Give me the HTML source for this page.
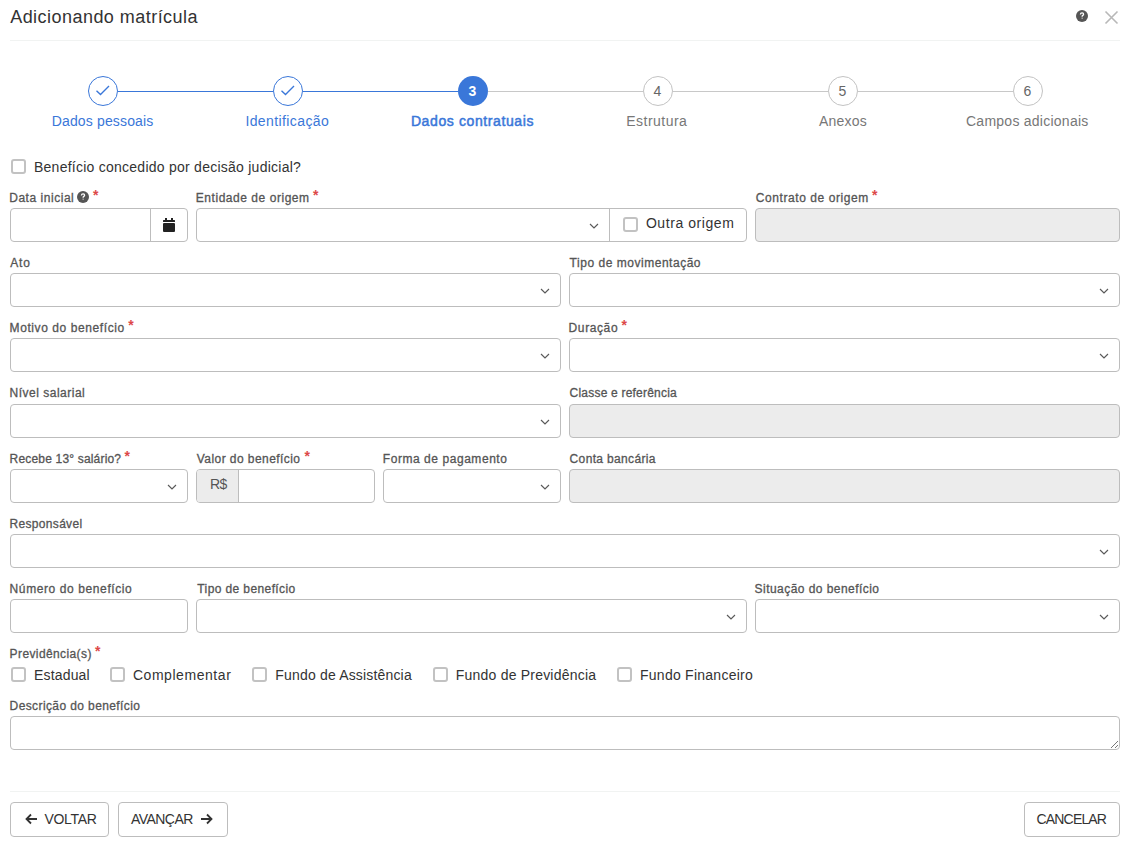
<!DOCTYPE html>
<html><head><meta charset="utf-8"><title>Adicionando matrícula</title>
<style>
*{margin:0;padding:0;box-sizing:border-box}
html,body{width:1132px;height:842px;background:#fff;overflow:hidden;font-family:"Liberation Sans",sans-serif}
.t{position:absolute;white-space:nowrap}
.box{position:absolute;border:1px solid #bdbdbd;border-radius:4px}
.ic{position:absolute}
.cb{position:absolute;width:15px;height:15px;border:2px solid #c2c2c2;border-radius:3px;background:#fff}
.star{font-size:14px;line-height:14px;color:#dd4848;font-weight:700}
.line{position:absolute;height:1px}
.btn{position:absolute;border:1px solid #bdbdbd;border-radius:4px;background:#fff}
</style></head>
<body>
<div class="t" style="left:10.2px;top:8px;font-size:18px;line-height:18px;color:#333;font-weight:400;letter-spacing:0.46px;">Adicionando matrícula</div>
<svg class="ic" style="left:1076px;top:10.2px" width="12" height="12" viewBox="0 0 12 12"><circle cx="6" cy="6" r="6" fill="#555"/><path d="M4.4 4.5 Q4.5 2.9 6.1 2.9 Q7.6 2.9 7.6 4.2 Q7.6 5.0 6.8 5.4 Q6.1 5.8 6.1 6.7" fill="none" stroke="#fff" stroke-width="1.3"/><path d="M5.3 7.7 L6.9 7.7 L6.1 9.0 Z" fill="#fff"/></svg>
<svg class="ic" style="left:1104px;top:10px" width="15" height="15" viewBox="0 0 15 15"><path d="M1.5 1.5 L13.5 13.5 M13.5 1.5 L1.5 13.5" stroke="#b8b8b8" stroke-width="1.6"/></svg>
<div class="line" style="left:10px;top:40px;width:1110px;background:#f1f3f2"></div>
<div class="line" style="left:117.5px;top:91px;width:155.0px;background:#3a77d9"></div>
<div class="line" style="left:302.5px;top:91px;width:155.0px;background:#3a77d9"></div>
<div class="line" style="left:487.5px;top:91px;width:155.0px;background:#c8c8c8"></div>
<div class="line" style="left:672.5px;top:91px;width:155.0px;background:#c8c8c8"></div>
<div class="line" style="left:857.5px;top:91px;width:155.0px;background:#c8c8c8"></div>
<div style="position:absolute;left:87.5px;top:76px;width:30px;height:30px;border:1px solid #3a77d9;border-radius:50%;background:#fff"></div>
<svg class="ic" style="left:87.5px;top:76px" width="30" height="30" viewBox="0 0 30 30"><path d="M8.5 14.7 L12.5 18.5 L21 10" fill="none" stroke="#3a77d9" stroke-width="1.35"/></svg>
<div class="t" style="left:51.7px;top:114px;font-size:14px;line-height:14px;color:#3a77d9;font-weight:400;letter-spacing:0.154px;">Dados pessoais</div>
<div style="position:absolute;left:272.5px;top:76px;width:30px;height:30px;border:1px solid #3a77d9;border-radius:50%;background:#fff"></div>
<svg class="ic" style="left:272.5px;top:76px" width="30" height="30" viewBox="0 0 30 30"><path d="M8.5 14.7 L12.5 18.5 L21 10" fill="none" stroke="#3a77d9" stroke-width="1.35"/></svg>
<div class="t" style="left:245.4px;top:114px;font-size:14px;line-height:14px;color:#3a77d9;font-weight:400;letter-spacing:0.4px;">Identificação</div>
<div style="position:absolute;left:457.5px;top:76px;width:30px;height:30px;border-radius:50%;background:#3a77d9"></div>
<div class="t" style="left:457.5px;width:30px;text-align:center;top:84px;font-size:14px;line-height:14px;color:#fff;font-weight:700">3</div>
<div class="t" style="left:410.9px;top:114px;font-size:14px;line-height:14px;color:#3a77d9;font-weight:400;letter-spacing:0.606px;-webkit-text-stroke:0.5px #3a77d9;">Dados contratuais</div>
<div style="position:absolute;left:642.5px;top:76px;width:30px;height:30px;border:1px solid #c3c3c3;border-radius:50%;background:#fff"></div>
<div class="t" style="left:642.5px;width:30px;text-align:center;top:84px;font-size:14px;line-height:14px;color:#666">4</div>
<div class="t" style="left:626.2px;top:114px;font-size:14px;line-height:14px;color:#777;font-weight:400;letter-spacing:0.487px;">Estrutura</div>
<div style="position:absolute;left:827.5px;top:76px;width:30px;height:30px;border:1px solid #c3c3c3;border-radius:50%;background:#fff"></div>
<div class="t" style="left:827.5px;width:30px;text-align:center;top:84px;font-size:14px;line-height:14px;color:#666">5</div>
<div class="t" style="left:819.0px;top:114px;font-size:14px;line-height:14px;color:#777;font-weight:400;letter-spacing:0.2px;">Anexos</div>
<div style="position:absolute;left:1012.5px;top:76px;width:30px;height:30px;border:1px solid #c3c3c3;border-radius:50%;background:#fff"></div>
<div class="t" style="left:1012.5px;width:30px;text-align:center;top:84px;font-size:14px;line-height:14px;color:#666">6</div>
<div class="t" style="left:966.0px;top:114px;font-size:14px;line-height:14px;color:#777;font-weight:400;letter-spacing:0.25px;">Campos adicionais</div>
<div class="cb" style="left:11px;top:159px"></div>
<div class="t" style="left:34.0px;top:160px;font-size:14px;line-height:14px;color:#333;font-weight:400;letter-spacing:0.25px;">Benefício concedido por decisão judicial?</div>
<div class="t" style="left:9.2px;top:192px;font-size:12px;line-height:12px;color:#555;font-weight:400;letter-spacing:0.536px;-webkit-text-stroke:0.3px #555;">Data inicial</div>
<svg class="ic" style="left:77px;top:191px" width="12" height="12" viewBox="0 0 12 12"><circle cx="6" cy="6" r="6" fill="#555"/><path d="M4.4 4.5 Q4.5 2.9 6.1 2.9 Q7.6 2.9 7.6 4.2 Q7.6 5.0 6.8 5.4 Q6.1 5.8 6.1 6.7" fill="none" stroke="#fff" stroke-width="1.3"/><path d="M5.3 7.7 L6.9 7.7 L6.1 9.0 Z" fill="#fff"/></svg>
<div class="t star" style="left:93px;top:188px">*</div>
<div class="box" style="left:10.00px;top:208px;width:178.33px;height:34px;background:#fff;"></div>
<div class="line" style="left:150px;top:208px;width:1px;height:34px;background:#bdbdbd"></div>
<svg class="ic" style="left:163px;top:218px" width="12" height="14" viewBox="0 0 12 14"><rect x="2" y="0" width="2" height="3" fill="#222"/><rect x="8" y="0" width="2" height="3" fill="#222"/><rect x="0" y="2" width="12" height="2" rx="0.5" fill="#222"/><rect x="0" y="5" width="12" height="9" rx="1" fill="#222"/></svg>
<div class="t" style="left:195.8px;top:192px;font-size:12px;line-height:12px;color:#555;font-weight:400;letter-spacing:0.541px;-webkit-text-stroke:0.3px #555;">Entidade de origem</div>
<div class="t star" style="left:313px;top:188px">*</div>
<div class="box" style="left:196.33px;top:208px;width:551.00px;height:34px;background:#fff;"></div>
<div class="line" style="left:609px;top:208px;width:1px;height:34px;background:#bdbdbd"></div>
<svg class="ic" style="left:589px;top:222px" width="10" height="8" viewBox="0 0 10 8"><path d="M1 2 L5 6 L9 2" fill="none" stroke="#5a5a5a" stroke-width="1.15"/></svg>
<div class="cb" style="left:623px;top:217px"></div>
<div class="t" style="left:645.9px;top:216px;font-size:14px;line-height:14px;color:#333;font-weight:400;letter-spacing:0.573px;">Outra origem</div>
<div class="t" style="left:755.8px;top:192px;font-size:12px;line-height:12px;color:#555;font-weight:400;letter-spacing:0.571px;-webkit-text-stroke:0.3px #555;">Contrato de origem</div>
<div class="t star" style="left:872px;top:188px">*</div>
<div class="box" style="left:755.33px;top:208px;width:364.67px;height:34px;background:#ececec;"></div>
<div class="t" style="left:10.2px;top:257px;font-size:12px;line-height:12px;color:#555;font-weight:400;letter-spacing:0.9px;-webkit-text-stroke:0.3px #555;">Ato</div>
<div class="box" style="left:10.00px;top:273px;width:551.00px;height:34px;background:#fff;"></div>
<svg class="ic" style="left:540px;top:287px" width="10" height="8" viewBox="0 0 10 8"><path d="M1 2 L5 6 L9 2" fill="none" stroke="#5a5a5a" stroke-width="1.15"/></svg>
<div class="t" style="left:569.6px;top:257px;font-size:12px;line-height:12px;color:#555;font-weight:400;letter-spacing:0.526px;-webkit-text-stroke:0.3px #555;">Tipo de movimentação</div>
<div class="box" style="left:569.00px;top:273px;width:551.00px;height:34px;background:#fff;"></div>
<svg class="ic" style="left:1099px;top:287px" width="10" height="8" viewBox="0 0 10 8"><path d="M1 2 L5 6 L9 2" fill="none" stroke="#5a5a5a" stroke-width="1.15"/></svg>
<div class="t" style="left:9.6px;top:322px;font-size:12px;line-height:12px;color:#555;font-weight:400;letter-spacing:0.583px;-webkit-text-stroke:0.3px #555;">Motivo do benefício</div>
<div class="t star" style="left:128.3px;top:318px">*</div>
<div class="box" style="left:10.00px;top:338px;width:551.00px;height:34px;background:#fff;"></div>
<svg class="ic" style="left:540px;top:352px" width="10" height="8" viewBox="0 0 10 8"><path d="M1 2 L5 6 L9 2" fill="none" stroke="#5a5a5a" stroke-width="1.15"/></svg>
<div class="t" style="left:568.6px;top:322px;font-size:12px;line-height:12px;color:#555;font-weight:400;letter-spacing:0.6px;-webkit-text-stroke:0.3px #555;">Duração</div>
<div class="t star" style="left:621.5px;top:318px">*</div>
<div class="box" style="left:569.00px;top:338px;width:551.00px;height:34px;background:#fff;"></div>
<svg class="ic" style="left:1099px;top:352px" width="10" height="8" viewBox="0 0 10 8"><path d="M1 2 L5 6 L9 2" fill="none" stroke="#5a5a5a" stroke-width="1.15"/></svg>
<div class="t" style="left:9.6px;top:387px;font-size:12px;line-height:12px;color:#555;font-weight:400;letter-spacing:0.5px;-webkit-text-stroke:0.3px #555;">Nível salarial</div>
<div class="box" style="left:10.00px;top:404px;width:551.00px;height:34px;background:#fff;"></div>
<svg class="ic" style="left:540px;top:418px" width="10" height="8" viewBox="0 0 10 8"><path d="M1 2 L5 6 L9 2" fill="none" stroke="#5a5a5a" stroke-width="1.15"/></svg>
<div class="t" style="left:569.6px;top:387px;font-size:12px;line-height:12px;color:#555;font-weight:400;letter-spacing:0.206px;-webkit-text-stroke:0.3px #555;">Classe e referência</div>
<div class="box" style="left:569.00px;top:404px;width:551.00px;height:34px;background:#ececec;"></div>
<div class="t" style="left:9.6px;top:453px;font-size:12px;line-height:12px;color:#555;font-weight:400;letter-spacing:0.178px;-webkit-text-stroke:0.3px #555;">Recebe 13° salário?</div>
<div class="t star" style="left:124.4px;top:449px">*</div>
<div class="box" style="left:10.00px;top:469px;width:178.33px;height:34px;background:#fff;"></div>
<svg class="ic" style="left:167px;top:483px" width="10" height="8" viewBox="0 0 10 8"><path d="M1 2 L5 6 L9 2" fill="none" stroke="#5a5a5a" stroke-width="1.15"/></svg>
<div class="t" style="left:196.8px;top:453px;font-size:12px;line-height:12px;color:#555;font-weight:400;letter-spacing:0.435px;-webkit-text-stroke:0.3px #555;">Valor do benefício</div>
<div class="t star" style="left:304.5px;top:449px">*</div>
<div class="box" style="left:196.33px;top:469px;width:178.33px;height:34px;background:#fff;"></div>
<div style="position:absolute;left:196.5px;top:470px;width:42px;height:32px;background:#ececec;border-radius:3px 0 0 3px"></div>
<div class="line" style="left:238px;top:469px;width:1px;height:34px;background:#bdbdbd"></div>
<div class="t" style="left:210px;top:477px;font-size:14px;line-height:14px;color:#555;font-weight:400;letter-spacing:-0.5px;">R$</div>
<div class="t" style="left:382.8px;top:453px;font-size:12px;line-height:12px;color:#555;font-weight:400;letter-spacing:0.553px;-webkit-text-stroke:0.3px #555;">Forma de pagamento</div>
<div class="box" style="left:382.67px;top:469px;width:178.33px;height:34px;background:#fff;"></div>
<svg class="ic" style="left:540px;top:483px" width="10" height="8" viewBox="0 0 10 8"><path d="M1 2 L5 6 L9 2" fill="none" stroke="#5a5a5a" stroke-width="1.15"/></svg>
<div class="t" style="left:569.6px;top:453px;font-size:12px;line-height:12px;color:#555;font-weight:400;letter-spacing:0.346px;-webkit-text-stroke:0.3px #555;">Conta bancária</div>
<div class="box" style="left:569.00px;top:469px;width:551.00px;height:34px;background:#ececec;"></div>
<div class="t" style="left:9.6px;top:518px;font-size:12px;line-height:12px;color:#555;font-weight:400;letter-spacing:0.31px;-webkit-text-stroke:0.3px #555;">Responsável</div>
<div class="box" style="left:10.00px;top:534px;width:1110.00px;height:34px;background:#fff;"></div>
<svg class="ic" style="left:1099px;top:548px" width="10" height="8" viewBox="0 0 10 8"><path d="M1 2 L5 6 L9 2" fill="none" stroke="#5a5a5a" stroke-width="1.15"/></svg>
<div class="t" style="left:9.6px;top:583px;font-size:12px;line-height:12px;color:#555;font-weight:400;letter-spacing:0.6px;-webkit-text-stroke:0.3px #555;">Número do benefício</div>
<div class="box" style="left:10.00px;top:599px;width:178.33px;height:34px;background:#fff;"></div>
<div class="t" style="left:197.3px;top:583px;font-size:12px;line-height:12px;color:#555;font-weight:400;letter-spacing:0.394px;-webkit-text-stroke:0.3px #555;">Tipo de benefício</div>
<div class="box" style="left:196.33px;top:599px;width:551.00px;height:34px;background:#fff;"></div>
<svg class="ic" style="left:726px;top:613px" width="10" height="8" viewBox="0 0 10 8"><path d="M1 2 L5 6 L9 2" fill="none" stroke="#5a5a5a" stroke-width="1.15"/></svg>
<div class="t" style="left:754.6px;top:583px;font-size:12px;line-height:12px;color:#555;font-weight:400;letter-spacing:0.45px;-webkit-text-stroke:0.3px #555;">Situação do benefício</div>
<div class="box" style="left:755.33px;top:599px;width:364.67px;height:34px;background:#fff;"></div>
<svg class="ic" style="left:1099px;top:613px" width="10" height="8" viewBox="0 0 10 8"><path d="M1 2 L5 6 L9 2" fill="none" stroke="#5a5a5a" stroke-width="1.15"/></svg>
<div class="t" style="left:9.6px;top:648px;font-size:12px;line-height:12px;color:#555;font-weight:400;letter-spacing:0.392px;-webkit-text-stroke:0.3px #555;">Previdência(s)</div>
<div class="t star" style="left:95px;top:644px">*</div>
<div class="cb" style="left:11px;top:667px"></div>
<div class="t" style="left:34.0px;top:668px;font-size:14px;line-height:14px;color:#333;font-weight:400;letter-spacing:0.171px;">Estadual</div>
<div class="cb" style="left:110px;top:667px"></div>
<div class="t" style="left:132.9px;top:668px;font-size:14px;line-height:14px;color:#333;font-weight:400;letter-spacing:0.555px;">Complementar</div>
<div class="cb" style="left:252px;top:667px"></div>
<div class="t" style="left:275.3px;top:668px;font-size:14px;line-height:14px;color:#333;font-weight:400;letter-spacing:0.174px;">Fundo de Assistência</div>
<div class="cb" style="left:433px;top:667px"></div>
<div class="t" style="left:455.8px;top:668px;font-size:14px;line-height:14px;color:#333;font-weight:400;letter-spacing:0.211px;">Fundo de Previdência</div>
<div class="cb" style="left:617px;top:667px"></div>
<div class="t" style="left:640.0px;top:668px;font-size:14px;line-height:14px;color:#333;font-weight:400;letter-spacing:0.253px;">Fundo Financeiro</div>
<div class="t" style="left:9.6px;top:700px;font-size:12px;line-height:12px;color:#555;font-weight:400;letter-spacing:0.395px;-webkit-text-stroke:0.3px #555;">Descrição do benefício</div>
<div class="box" style="left:10.00px;top:716px;width:1110.00px;height:34px;background:#fff;"></div>
<svg class="ic" style="left:1109px;top:739px" width="10" height="10" viewBox="0 0 10 10"><path d="M9 2 L2 9 M9 6 L6 9" stroke="#777" stroke-width="1"/></svg>
<div class="line" style="left:10px;top:791px;width:1110px;background:#f1f3f2"></div>
<div class="btn" style="left:10px;top:802px;width:99px;height:35px"></div>
<svg class="ic" style="left:25px;top:813px" width="13" height="12" viewBox="0 0 13 12"><path d="M12 6 L1.5 6 M6 1.5 L1.5 6 L6 10.5" fill="none" stroke="#333" stroke-width="1.8"/></svg>
<div class="t" style="left:44.4px;top:812px;font-size:14px;line-height:14px;color:#333;font-weight:400;letter-spacing:-0.3px;">VOLTAR</div>
<div class="btn" style="left:118px;top:802px;width:110px;height:35px"></div>
<div class="t" style="left:130.9px;top:812px;font-size:14px;line-height:14px;color:#333;font-weight:400;letter-spacing:-0.517px;">AVANÇAR</div>
<svg class="ic" style="left:200px;top:813px" width="13" height="12" viewBox="0 0 13 12"><path d="M1 6 L11.5 6 M7 1.5 L11.5 6 L7 10.5" fill="none" stroke="#333" stroke-width="1.8"/></svg>
<div class="btn" style="left:1024px;top:802px;width:96px;height:35px"></div>
<div class="t" style="left:1036.6px;top:812px;font-size:14px;line-height:14px;color:#333;font-weight:400;letter-spacing:-0.843px;">CANCELAR</div>
</body></html>
